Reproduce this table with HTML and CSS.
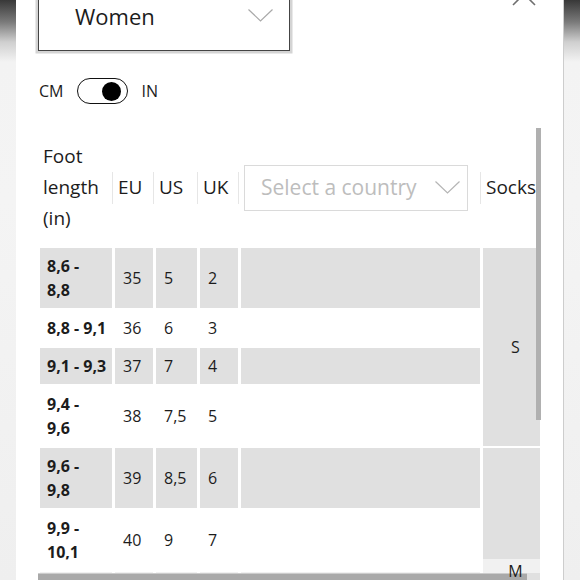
FILE: index.html
```html
<!DOCTYPE html>
<html lang="en">
<head>
<meta charset="utf-8">
<title>Size guide</title>
<link rel="stylesheet" href="styles.css">
</head>
<body>
<div class="edge edge-left"></div>
<main class="panel">
  <button class="close" aria-label="Close">
    <svg width="24" height="24" viewBox="0 0 24 24"><path d="M1 1L23 23M23 1L1 23" stroke="#6f6f6f" stroke-width="1.6" fill="none"/></svg>
  </button>
  <div class="gender-select">
    <span class="gender-label">Women</span>
    <svg class="chev" width="25" height="13" viewBox="0 0 25 13"><path d="M0.5 0.5L12.5 12L24.5 0.5" stroke="#a9a9a9" stroke-width="1.2" fill="none"/></svg>
  </div>
  <div class="unit-toggle">
    <span class="unit">CM</span>
    <span class="switch"><span class="knob"></span></span>
    <span class="unit">IN</span>
  </div>
  <table class="size-table">
    <colgroup>
      <col class="c-foot"><col class="c-eu"><col class="c-us"><col class="c-uk"><col class="c-country"><col class="c-socks">
    </colgroup>
    <thead>
      <tr>
        <th class="sep">Foot<br>length<br>(in)</th>
        <th class="sep">EU</th>
        <th class="sep">US</th>
        <th class="sep">UK</th>
        <th class="sep">
          <div class="country-select">
            <span>Select a country</span>
            <svg width="25" height="13" viewBox="0 0 25 13"><path d="M0.5 0.5L12.5 12L24.5 0.5" stroke="#b5b5b5" stroke-width="1.2" fill="none"/></svg>
          </div>
        </th>
        <th>Socks</th>
      </tr>
    </thead>
    <tbody>
      <tr class="shade"><td class="len">8,6 -<br>8,8</td><td>35</td><td>5</td><td>2</td><td></td><td class="socks" rowspan="4">S</td></tr>
      <tr><td class="len nowrap">8,8 - 9,1</td><td>36</td><td>6</td><td>3</td><td></td></tr>
      <tr class="shade"><td class="len nowrap">9,1 - 9,3</td><td>37</td><td>7</td><td>4</td><td></td></tr>
      <tr><td class="len">9,4 -<br>9,6</td><td>38</td><td>7,5</td><td>5</td><td></td></tr>
      <tr class="shade"><td class="len">9,6 -<br>9,8</td><td>39</td><td>8,5</td><td>6</td><td></td><td class="socks" rowspan="4"><span class="over">M</span></td></tr>
      <tr><td class="len">9,9 -<br>10,1</td><td>40</td><td>9</td><td>7</td><td></td></tr>
      <tr class="shade tall"><td></td><td></td><td></td><td></td><td></td></tr>
      <tr class="tall"><td></td><td></td><td></td><td></td><td></td></tr>
    </tbody>
  </table>
  <div class="vscroll"></div>
  <div class="fade"></div>
  <div class="hscroll"></div>
</main>
<div class="edge edge-right"></div>
</body>
</html>
```

FILE: styles.css
```css
html, body {
  margin: 0;
  padding: 0;
}
body {
  width: 580px;
  height: 580px;
  overflow: hidden;
  display: flex;
  font-family: "Open Sans", "Noto Sans", sans-serif;
  color: #1c1c1c;
  background: #fff;
}
.edge {
  flex: 0 0 auto;
  height: 580px;
  background: linear-gradient(to bottom, #383838 0, #7a7a7a 22px, #cfcfcf 42px, #f3f3f3 62px, #f4f4f4 200px, #efefef 580px);
}
.edge-left {
  width: 16px;
}
.edge-right {
  width: 16px;
  border-left: 1px solid #cdcdcd;
}
.panel {
  position: relative;
  flex: 1 1 auto;
  height: 580px;
  overflow: hidden;
  background: #fff;
  padding-left: 22px;
  box-sizing: border-box;
}
.close {
  position: absolute;
  top: -18px;
  right: 27px;
  width: 24px;
  height: 24px;
  padding: 0;
  border: 0;
  background: none;
}
.close svg {
  display: block;
}
.gender-select {
  box-sizing: border-box;
  margin-top: -20px;
  width: 252px;
  height: 71px;
  border: 1.5px solid #444;
  box-shadow: 0 0 0 2.5px #d4d4d4;
  display: flex;
  align-items: center;
  padding-left: 36px;
  padding-right: 16px;
}
.gender-label {
  flex: 1;
  font-size: 22px;
  line-height: 30px;
}
.chev {
  margin-top: -1px;
}
.unit-toggle {
  display: flex;
  align-items: center;
  margin-top: 27px;
  height: 26px;
  font-size: 16px;
}
.unit:first-child {
  margin-left: 1px;
}
.switch {
  box-sizing: border-box;
  width: 51px;
  height: 26px;
  margin: 0 13px 0 14px;
  border: 1.5px solid #111;
  border-radius: 13px;
  display: flex;
  align-items: center;
  justify-content: flex-end;
  padding-right: 6px;
}
.knob {
  width: 19px;
  height: 19px;
  border-radius: 50%;
  background: #000;
}
.size-table {
  margin-top: 35px;
  margin-left: -1px;
  width: 506px;
  table-layout: fixed;
  border-collapse: separate;
  border-spacing: 3px 2px;
}
.c-foot { width: 72px; }
.c-eu { width: 38px; }
.c-us { width: 41px; }
.c-uk { width: 38px; }
.c-country { width: 239px; }
.c-socks { width: 57px; }
th {
  position: relative;
  text-align: left;
  font-weight: 400;
  font-size: 19px;
  line-height: 31px;
  padding: 0 0 12px 3px;
  vertical-align: middle;
  white-space: nowrap;
}
th.sep::after {
  content: "";
  position: absolute;
  right: -1px;
  top: 31px;
  height: 32px;
  width: 1px;
  background: #e6e6e6;
}
.country-select {
  box-sizing: border-box;
  width: 224px;
  height: 46px;
  border: 1px solid #dadada;
  display: flex;
  align-items: center;
  justify-content: space-between;
  padding: 0 7px 0 16px;
  font-size: 21px;
  color: #bdbdbd;
}
td {
  font-size: 16px;
  line-height: 24px;
  padding: 6px 7px 6px 8px;
  vertical-align: middle;
  background: #fff;
}
.shade td {
  background: #e0e0e0;
}
.tall td {
  height: 48px;
}
td.len {
  font-weight: 700;
  padding-left: 7px;
}
td.nowrap {
  white-space: nowrap;
}
td.socks {
  background: #e0e0e0;
  text-align: center;
  padding-left: 8px;
  padding-right: 0;
}
.over {
  position: relative;
  z-index: 3;
}
.vscroll {
  position: absolute;
  left: 520px;
  top: 128px;
  width: 5px;
  height: 292px;
  background: #b0b0b0;
}
.fade {
  position: absolute;
  left: 22px;
  top: 559px;
  width: 503px;
  height: 14px;
  background: rgba(255, 255, 255, 0.55);
  z-index: 1;
}
.hscroll {
  position: absolute;
  left: 22px;
  top: 573px;
  width: 489px;
  height: 7px;
  background: #a9a9a9;
  border-top: 1px solid #cccccc;
  box-sizing: border-box;
  z-index: 2;
}
```
